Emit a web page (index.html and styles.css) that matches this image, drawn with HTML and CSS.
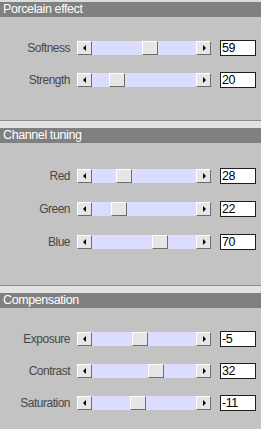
FILE: index.html
```html
<!DOCTYPE html>
<html lang="en">
<head>
    <meta charset="UTF-8">
    <title>Porcelain</title>
    <link rel="stylesheet" href="styles.css">
</head>
<body>
    <div class="panel">
        <!-- Porcelain effect -->
        <div class="section first">
            <div class="header">Porcelain effect</div>
            <div class="rows">
                <div class="row">
                    <span class="label">Softness</span>
                    <div class="scroll"><span class="btn left"></span><div class="track"><span class="thumb" style="left: 50px"></span></div><span class="btn right"></span></div>
                    <div class="value">59</div>
                </div>
                <div class="row">
                    <span class="label">Strength</span>
                    <div class="scroll"><span class="btn left"></span><div class="track"><span class="thumb" style="left: 17px"></span></div><span class="btn right"></span></div>
                    <div class="value">20</div>
                </div>
            </div>
        </div>

        <!-- Channel tuning -->
        <div class="section second">
            <div class="header">Channel tuning</div>
            <div class="rows">
                <div class="row">
                    <span class="label">Red</span>
                    <div class="scroll"><span class="btn left"></span><div class="track"><span class="thumb" style="left: 24px"></span></div><span class="btn right"></span></div>
                    <div class="value">28</div>
                </div>
                <div class="row">
                    <span class="label">Green</span>
                    <div class="scroll"><span class="btn left"></span><div class="track"><span class="thumb" style="left: 19px"></span></div><span class="btn right"></span></div>
                    <div class="value">22</div>
                </div>
                <div class="row">
                    <span class="label">Blue</span>
                    <div class="scroll"><span class="btn left"></span><div class="track"><span class="thumb" style="left: 60px"></span></div><span class="btn right"></span></div>
                    <div class="value">70</div>
                </div>
            </div>
        </div>

        <!-- Compensation -->
        <div class="section third">
            <div class="header">Compensation</div>
            <div class="rows">
                <div class="row">
                    <span class="label">Exposure</span>
                    <div class="scroll"><span class="btn left"></span><div class="track"><span class="thumb" style="left: 40px"></span></div><span class="btn right"></span></div>
                    <div class="value">-5</div>
                </div>
                <div class="row">
                    <span class="label">Contrast</span>
                    <div class="scroll"><span class="btn left"></span><div class="track"><span class="thumb" style="left: 56px"></span></div><span class="btn right"></span></div>
                    <div class="value">32</div>
                </div>
                <div class="row">
                    <span class="label">Saturation</span>
                    <div class="scroll"><span class="btn left"></span><div class="track"><span class="thumb" style="left: 38px"></span></div><span class="btn right"></span></div>
                    <div class="value">-11</div>
                </div>
            </div>
        </div>
    </div>
</body>
</html>
```

FILE: styles.css
```css
body {
    margin: 0;
    padding: 0;
    background-color: #c3c3c3;
    font-family: "Liberation Sans", Arial, sans-serif;
    font-size: 12px;
    letter-spacing: -0.5px;
}

.panel {
    width: 261px;
    height: 429px;
    overflow: hidden;
}

.section {
    display: flex;
    flex-direction: column;
}

.section.first {
    padding-top: 2px;
    background: linear-gradient(#dcdcdc 2px, transparent 2px);
}

.section.second,
.section.third {
    border-top: 1px solid #8c8c8c;
    padding-top: 7px;
    background: linear-gradient(#e2e2e2 7px, transparent 7px);
}

.header {
    height: 15px;
    line-height: 15px;
    background-color: #808080;
    color: #ffffff;
    padding-left: 3px;
    font-size: 12.5px;
    letter-spacing: -0.4px;
}

.rows {
    display: flex;
    flex-direction: column;
    gap: 16px;
}

.first .rows {
    padding: 23px 0 32px;
}

.second .rows {
    padding: 25px 0 35px;
    gap: 17px;
}

.third .rows {
    padding: 23px 0 16px;
}

.row {
    display: flex;
    align-items: center;
    height: 16px;
}

.label {
    width: 70px;
    text-align: right;
    color: #484848;
    margin-right: 7px;
}

.scroll {
    display: flex;
    width: 134px;
    height: 14px;
    margin-right: 9px;
}

.btn {
    position: relative;
    width: 13px;
    height: 12px;
    background-color: #e6e6e6;
    border: 1px solid;
    border-color: #ffffff #6e6e6e #6e6e6e #ffffff;
    flex: none;
}

.btn::after {
    content: "";
    position: absolute;
    top: 3px;
    width: 0;
    height: 0;
    border-top: 3px solid transparent;
    border-bottom: 3px solid transparent;
}

.btn.left::after {
    left: 5px;
    border-right: 3px solid #000;
}

.btn.right::after {
    left: 6px;
    border-left: 3px solid #000;
}

.track {
    position: relative;
    flex: 1;
    background-color: #dcdcff;
}

.thumb {
    position: absolute;
    top: 0;
    width: 14px;
    height: 12px;
    background-color: #e6e6e6;
    border: 1px solid;
    border-color: #ffffff #6e6e6e #6e6e6e #ffffff;
}

.value {
    width: 33px;
    height: 14px;
    line-height: 14px;
    padding-left: 1px;
    background-color: #ffffff;
    border: 1px solid #1e1e1e;
    color: #000;
    font-size: 12.5px;
}
```
